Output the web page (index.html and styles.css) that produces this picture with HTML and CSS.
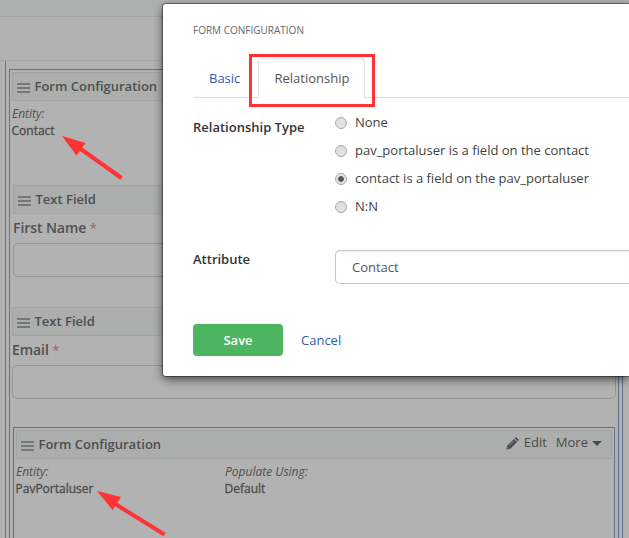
FILE: index.html
```html
<!DOCTYPE html>
<html lang="en">
<head>
<meta charset="utf-8">
<title>Form Configuration</title>
<link rel="stylesheet" href="styles.css">
</head>
<body>
<div class="topbar"></div>
<div class="toolbar"></div>
<main class="canvas">
  <section class="form">
    <div class="bar"><i class="grip"></i><span class="bar-title">Form Configuration</span></div>
    <div class="details first">
      <div class="detail"><em>Entity:</em><span class="value">Contact</span></div>
    </div>
    <div class="field shifted">
      <div class="bar"><i class="grip"></i><span class="bar-title">Text Field</span></div>
      <label class="field-label">First Name <span class="req">*</span></label>
      <div class="input"></div>
    </div>
    <div class="field email">
      <div class="bar"><i class="grip"></i><span class="bar-title">Text Field</span></div>
      <label class="field-label">Email <span class="req">*</span></label>
      <div class="input"></div>
    </div>
    <section class="subform">
      <div class="bar"><i class="grip"></i><span class="bar-title">Form Configuration</span>
        <div class="actions">
          <svg class="pencil" width="13" height="13" viewBox="0 0 13 13"><path d="M1 9 8 2l3 3-7 7-3.500.6z"/><path d="m8.700 1.300.8-.8q.5-.5 1 0l2 2q.5.5 0 1l-.8.8z"/><path class="shine" d="m3.200 8.700 5-5M1.400 10.200l1.400 1.400"/></svg>
          <span class="edit">Edit</span><span>More</span><i class="caret"></i>
        </div>
      </div>
      <div class="details">
        <div class="detail"><em>Entity:</em><span class="value">PavPortaluser</span></div>
        <div class="detail"><em>Populate Using:</em><span class="value">Default</span></div>
      </div>
    </section>
  </section>
</main>
<div class="modal">
  <h1>FORM CONFIGURATION</h1>
  <nav class="tabs"><a class="tab">Basic</a><a class="tab active">Relationship</a></nav>
  <div class="row type">
    <div class="row-label">Relationship Type</div>
    <div class="options">
      <div class="option"><i class="radio"></i><span>None</span></div>
      <div class="option"><i class="radio"></i><span>pav_portaluser is a field on the contact</span></div>
      <div class="option"><i class="radio on"></i><span>contact is a field on the pav_portaluser</span></div>
      <div class="option"><i class="radio"></i><span>N:N</span></div>
    </div>
  </div>
  <div class="row attribute">
    <div class="row-label">Attribute</div>
    <div class="select">Contact</div>
  </div>
  <div class="buttons"><a class="save">Save</a><a class="cancel">Cancel</a></div>
</div>
<div class="highlight"></div>
<svg class="arrows" width="629" height="538" viewBox="0 0 629 538">
  <path class="shaft" d="M78 147 121.500 178M112 502 164.500 534.500"/>
  <path class="head" d="M62 136 85.500 143 76.500 155.500zM97 491 121 497 112.500 510z"/>
</svg>
</body>
</html>
```

FILE: styles.css
```css
* { box-sizing: border-box; }
html { overflow: hidden; }
body {
  margin: 0;
  width: 629px;
  height: 538px;
  overflow: hidden;
  position: relative;
  background: #b2b2b2;
  color: #4a4a4a;
  font: 13px/18px "Open Sans", "Noto Sans", sans-serif;
}
.topbar { height: 17px; background: #adb1af; border-bottom: 1px solid #a2a4a3; }
.toolbar { height: 44px; border-bottom: 1px solid #a5a5a5; }
.canvas {
  height: 477px;
  margin: 0 6px 0 5px;
  padding: 8px 3px 0;
  border: solid #64738d;
  border-width: 0 1px;
}
.form {
  height: 469px;
  border: 1px solid #64738d;
  border-bottom: 0;
  padding: 2px 2px 0;
}
.bar {
  height: 29px;
  display: flex;
  align-items: center;
  background: #abaeac;
  border: 1px solid #a1a4a3;
  padding: 0 8px 0 4px;
}
.grip {
  width: 13px;
  height: 10px;
  margin: 3px 4.500px 0 0;
  background: linear-gradient(#777 0 2px, transparent 2px 4px, #777 4px 6px, transparent 6px 8px, #777 8px);
}
.bar-title { margin-top: -2px; font-weight: 600; color: #4e4e4e; }
.details { display: flex; padding-top: 4px; line-height: 17px; font-size: 12px; }
.details.first { height: 84px; }
.detail { width: 209px; display: flex; flex-direction: column; }
.detail em { color: #505050; }
.value { margin-left: -.5px; -webkit-text-stroke: .3px #4a4a4a; }
.field { height: 122px; }
.field.shifted { margin-left: 1px; }
.field.email { height: 120px; }
.field-label {
  display: block;
  margin-top: 4px;
  font-size: 14px;
  line-height: 20px;
  font-weight: 600;
  letter-spacing: -.07px;
  color: #505050;
}
.req { color: #b05555; font-weight: 400; font-size: 13px; }
.input {
  height: 34px;
  margin-top: 5px;
  border: 1px solid #959595;
  border-radius: 5px;
  width: 604px;
}
.subform {
  height: 112px;
  margin: 0 1px;
  border: 1px solid #64738d;
  border-bottom: 0;
  padding: 2px;
}
.actions { display: flex; align-items: center; margin: -6px 2px 0 auto; }
.pencil { margin: 4px 5px 0 0; fill: #484848; }
.shine { stroke: #9a9c9b; stroke-width: .8; fill: none; }
.edit { margin-right: 9px; }
.caret {
  margin: 4px -1px 0 4px;
  border: solid transparent;
  border-width: 5px 5px 0;
  border-top-color: #484848;
}
.modal {
  position: absolute;
  left: 163px;
  top: 4px;
  width: 466px;
  height: 372px;
  padding: 18px 0 0 30px;
  background: #fff;
  border-radius: 3px 0 0 3px;
  box-shadow: 0 0 0 1px rgba(0,0,0,.35), 0 3px 10px rgba(0,0,0,.65);
  color: #3f3f3f;
}
h1 { margin: 0; font-size: 10px; line-height: 16px; font-weight: 400; color: #666; }
.tabs { display: flex; height: 40px; margin-top: 20px; border-bottom: 1px solid #ddd; }
.tab { width: 65px; padding: 10px 15px 0; border: 1px solid transparent; color: #2a5db0; }
.tab.active {
  width: 107px;
  height: 40px;
  padding-left: 15.500px;
  color: #555;
  background: #fff;
  border-color: #ddd #ddd #fff;
  border-radius: 4px 4px 0 0;
}
.row { display: flex; }
.row-label { flex: none; width: 142px; font-weight: 600; color: #333; }
.type { padding-top: 20px; height: 136px; }
.options { margin-top: -5px; }
.option { display: flex; height: 28px; }
.radio {
  width: 12px;
  height: 12px;
  margin: 4px 8px 0 0;
  border: 1px solid #aaa;
  border-radius: 50%;
  background: linear-gradient(#ddd, #e4e4e4);
}
.radio.on { background: radial-gradient(circle, #555 0 2.500px, #e4e4e4 3.200px); }
.attribute { height: 86px; padding-top: 16px; }
.select {
  flex: 1;
  height: 34px;
  padding: 7px 16px;
  border: 1px solid #c6c6c6;
  border-right: 0;
  border-radius: 5px 0 0 5px;
  box-shadow: inset 0 1px 1px #eee;
  color: #555;
}
.buttons { display: flex; align-items: center; margin-top: 4px; }
.save {
  width: 90px;
  height: 32px;
  border-radius: 4px;
  background: #4db560;
  color: #fff;
  font-weight: 600;
  line-height: 32px;
  text-align: center;
}
.cancel { margin-left: 18px; color: #2a5db0; }
.highlight { position: absolute; left: 249px; top: 54px; width: 126px; height: 53px; border: 3px solid #f33; }
.arrows { position: absolute; left: 0; top: 0; }
.shaft { stroke: #f33; stroke-width: 4; fill: none; }
.head { fill: #f33; }
```
